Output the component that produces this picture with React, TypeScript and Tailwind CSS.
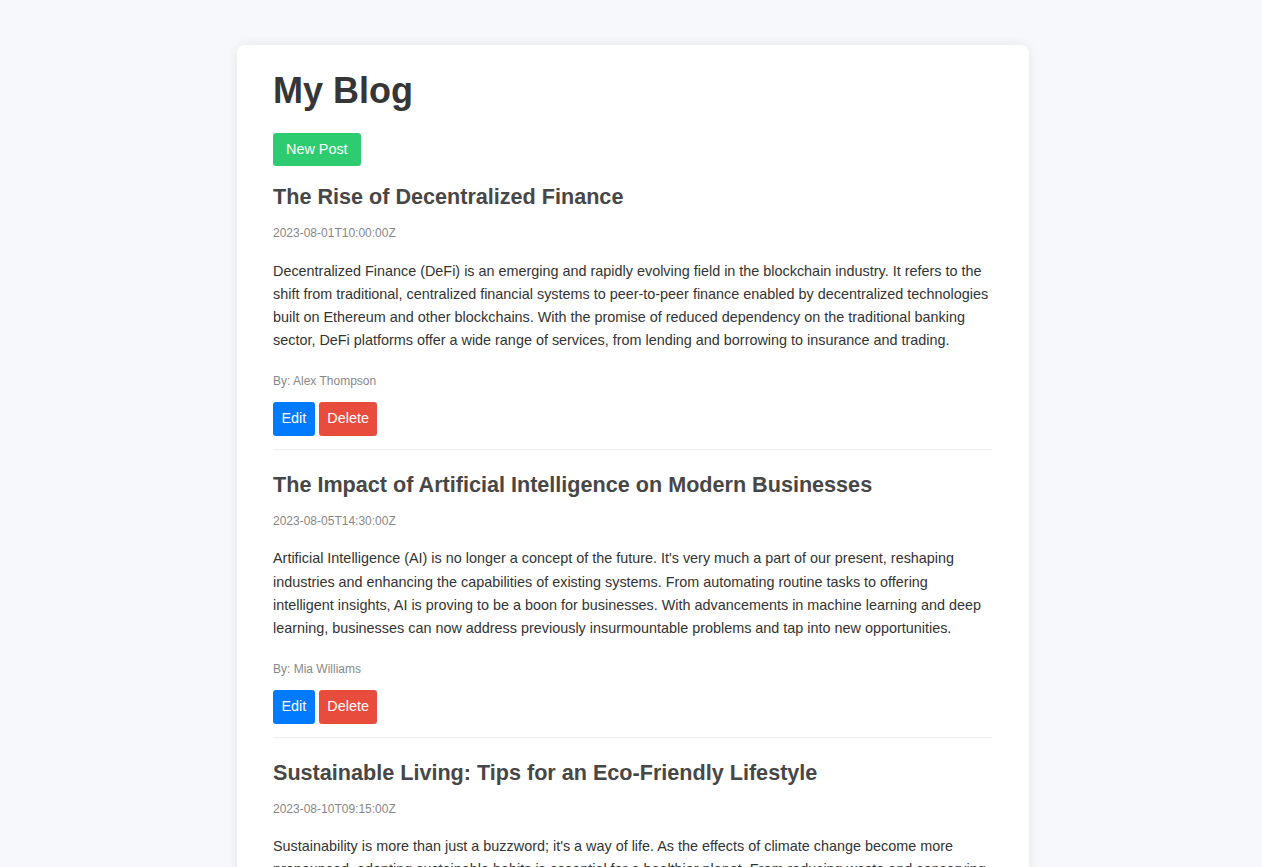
import React from 'react';

type Post = {
  id: number;
  title: string;
  date: string;
  body: string;
  author: string;
};

const posts: Post[] = [
  {
    id: 1,
    title: 'The Rise of Decentralized Finance',
    date: '2023-08-01T10:00:00Z',
    body: 'Decentralized Finance (DeFi) is an emerging and rapidly evolving field in the blockchain industry. It refers to the shift from traditional, centralized financial systems to peer-to-peer finance enabled by decentralized technologies built on Ethereum and other blockchains. With the promise of reduced dependency on the traditional banking sector, DeFi platforms offer a wide range of services, from lending and borrowing to insurance and trading.',
    author: 'Alex Thompson',
  },
  {
    id: 2,
    title: 'The Impact of Artificial Intelligence on Modern Businesses',
    date: '2023-08-05T14:30:00Z',
    body: "Artificial Intelligence (AI) is no longer a concept of the future. It's very much a part of our present, reshaping industries and enhancing the capabilities of existing systems. From automating routine tasks to offering intelligent insights, AI is proving to be a boon for businesses. With advancements in machine learning and deep learning, businesses can now address previously insurmountable problems and tap into new opportunities.",
    author: 'Mia Williams',
  },
  {
    id: 3,
    title: 'Sustainable Living: Tips for an Eco-Friendly Lifestyle',
    date: '2023-08-10T09:15:00Z',
    body: "Sustainability is more than just a buzzword; it's a way of life. As the effects of climate change become more pronounced, adopting sustainable habits is essential for a healthier planet. From reducing waste and conserving energy to choosing local produce, small everyday choices can add up to a significant positive impact.",
    author: 'Ethan Brooks',
  },
];

function PostItem({ post }: { post: Post }) {
  return (
    <article className="border-b border-[#eeeeee] pb-[13px] pt-[22px]">
      <h2 className="text-[21.6px] leading-[26px] font-bold text-[#474747]">{post.title}</h2>
      <p className="mt-[16px] text-[12px] leading-[14px] text-[#888888]">{post.date}</p>
      <p className="mt-[19.5px] text-[14.4px] leading-[23.33px] text-[#333333]">{post.body}</p>
      <p className="mt-[21px] text-[12px] leading-[14px] text-[#888888]">By: {post.author}</p>
      <div className="mt-[14px] flex gap-[4px]">
        <button className="h-[34px] px-[8.5px] rounded-[3px] bg-[#007bff] text-white text-[14.4px]">Edit</button>
        <button className="h-[34px] px-[8.5px] rounded-[3px] bg-[#e74c3c] text-white text-[14.4px]">Delete</button>
      </div>
    </article>
  );
}

export default function App() {
  return (
    <div className="min-h-screen bg-[#f7f8fc] pt-[45px] pl-[4px] font-['Liberation_Sans',Arial,sans-serif]">
      <div className="mx-auto w-[792px] bg-white rounded-[8px] shadow-[0_0_12px_rgba(0,0,30,0.08)] pl-[36px] pr-[37px] pt-[25px] pb-[20px]">
        <h1 className="text-[36px] leading-[41px] font-bold text-[#363636]">My Blog</h1>
        <button className="mt-[22px] h-[33px] px-[13px] rounded-[3px] bg-[#2ecc71] text-white text-[14.4px]">New Post</button>
        <div className="-mt-[4px]">
          {posts.map(p => <PostItem key={p.id} post={p} />)}
        </div>
      </div>
    </div>
  );
}
